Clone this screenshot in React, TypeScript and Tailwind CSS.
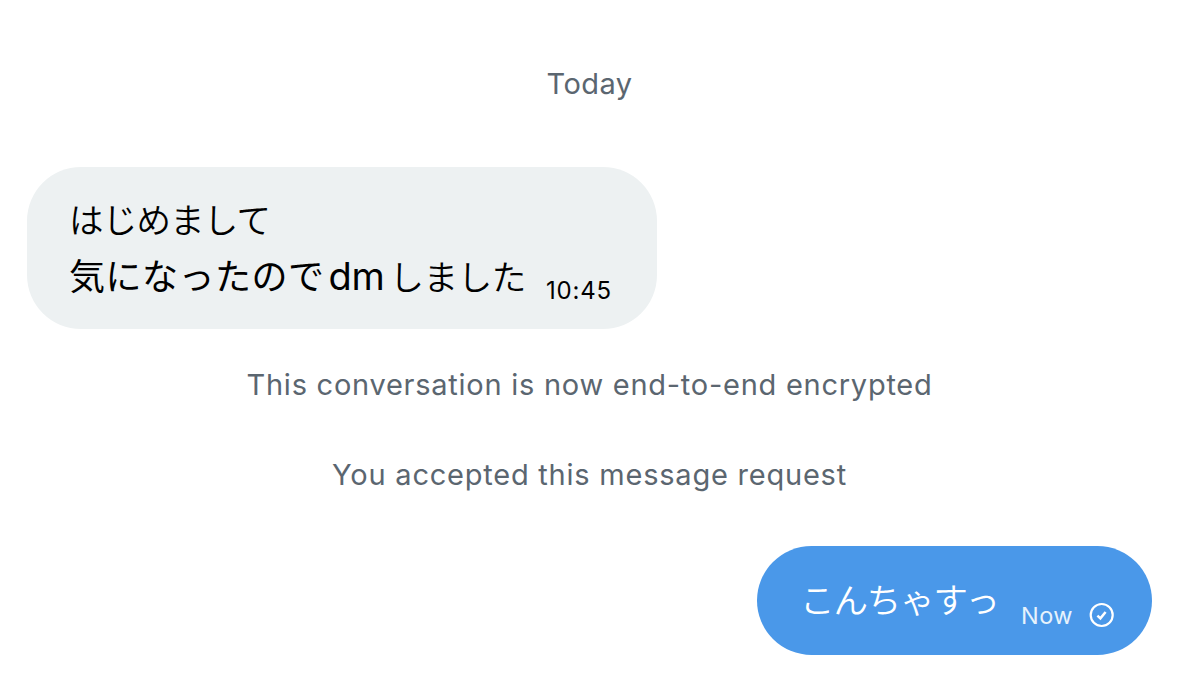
type NoticeProps = { text: string; className?: string };

function Notice({ text, className = '' }: NoticeProps) {
  return (
    <p className={`text-center text-[29px] leading-9 text-[#5b6670] whitespace-nowrap ${className}`}>
      {text}
    </p>
  );
}

function SentIcon() {
  return (
    <svg className="size-[26px] mt-[29px] ml-[16px] shrink-0" viewBox="0 0 26 26" fill="none" stroke="currentColor">
      <circle cx="12.7" cy="13" r="11" strokeWidth="2.2" />
      <path d="M8.4 13.6l3 2.8 5.2-6.4" strokeWidth="2.5" />
    </svg>
  );
}

export default function App() {
  return (
    <main className="flex h-[690px] w-[1179px] flex-col overflow-hidden bg-white font-['Inter','Noto_Sans_CJK_JP',sans-serif]">
      <Notice text="Today" className="mt-[66px] tracking-[0.4px]" />

      <div className="mt-[65px] ml-[27px] flex h-[162px] w-[630px] shrink-0 rounded-[54px] bg-[#edf1f2] pt-[26px] pl-[42px] text-black">
        <div className="w-[458px] shrink-0 leading-[56px] whitespace-nowrap">
          <p className="h-14 text-[34.5px] font-[350] tracking-[-0.8px]">はじめまして</p>
          <p className="-mt-px flex h-14 items-baseline">
            <span className="text-[36px] tracking-[0.5px]">気になったので</span>
            <span className="ml-[4px] text-[38px] font-[375] tracking-[-0.3px]">dm</span>
            <span className="ml-[5px] text-[34.5px] font-[350] tracking-[-0.4px]">しました</span>
          </p>
        </div>
        <span className="mt-[83px] ml-[19px] text-[24px] leading-[30px] font-[375] tracking-[0.8px]">10:45</span>
      </div>

      <Notice text="This conversation is now end-to-end encrypted" className="mt-[38px] tracking-[0.74px]" />
      <Notice text="You accepted this message request" className="mt-[54px] tracking-[0.77px]" />

      <div className="mt-[53px] mr-[27px] flex h-[109px] w-[395px] shrink-0 items-center self-end rounded-full bg-[#4a98e9] pl-[43px] text-white">
        <p className="w-[200px] text-[34.5px] leading-[56px] font-[350] tracking-[-1.1px] whitespace-nowrap">こんちゃすっ</p>
        <span className="mt-[31px] ml-[21px] text-[23.5px] leading-[30px] tracking-[0.5px] text-[#e6f2fc]">Now</span>
        <SentIcon />
      </div>
    </main>
  );
}
